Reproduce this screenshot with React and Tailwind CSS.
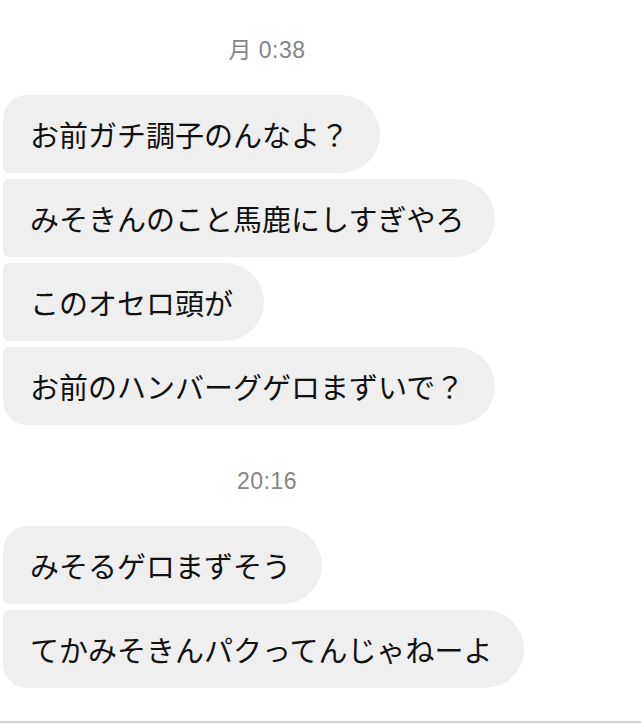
const groups = [
  {
    time: '月 0:38',
    messages: [
      'お前ガチ調子のんなよ？',
      'みそきんのこと馬鹿にしすぎやろ',
      'このオセロ頭が',
      'お前のハンバーグゲロまずいで？',
    ],
  },
  {
    time: '20:16',
    messages: ['みそるゲロまずそう', 'てかみそきんパクってんじゃねーよ'],
  },
]

function Bubble({ text, first, last }) {
  // left corners: big at the ends of a run, tight in between
  const tl = first ? 'rounded-tl-[24px]' : 'rounded-tl-[6px]'
  const bl = last ? 'rounded-bl-[24px]' : 'rounded-bl-[6px]'
  return (
    <div
      className={`h-[78px] self-start ml-[3px] pl-[27px] pr-[31px] flex items-center bg-[#efefef] rounded-r-[39px] ${tl} ${bl}`}
    >
      <span className="text-[29px] leading-none text-[#111] whitespace-nowrap">{text}</span>
    </div>
  )
}

export default function App() {
  return (
    <div
      className="min-h-[723px] bg-white flex flex-col"
      style={{ fontFamily: '"Noto Sans CJK JP", "Liberation Sans", sans-serif' }}
    >
      <div className="pt-[38px]">
        {groups.map((g, gi) => (
          <div key={gi} className={gi > 0 ? 'mt-[44px]' : ''}>
            <div className="w-[534px] text-center font-['Liberation_Sans','Noto_Sans_CJK_JP',sans-serif] text-[23px] leading-[24px] tracking-[0.5px] text-[#858585]">
              {g.time}
            </div>
            <div className="mt-[33px] flex flex-col gap-[6px]">
              {g.messages.map((m, i) => (
                <Bubble
                  key={i}
                  text={m}
                  first={i === 0}
                  last={i === g.messages.length - 1}
                />
              ))}
            </div>
          </div>
        ))}
      </div>
      <div className="mt-auto h-[2px] bg-[#d2d2d2]" />
    </div>
  )
}
